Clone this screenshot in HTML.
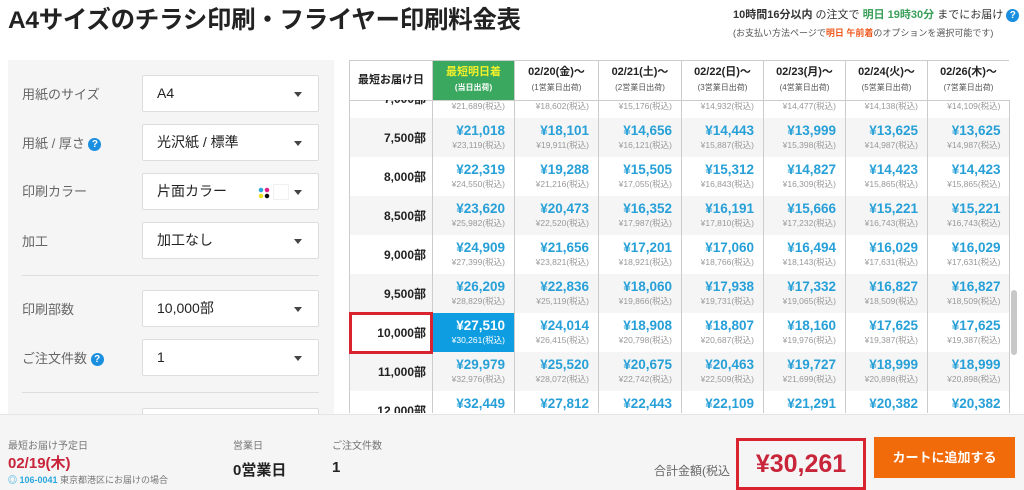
<!DOCTYPE html>
<html><head><meta charset="utf-8">
<style>
*{box-sizing:border-box;margin:0;padding:0}
body{width:1024px;height:490px;overflow:hidden;background:#fff;font-family:"Liberation Sans","Noto Sans CJK JP",sans-serif;color:#333;position:relative}
.abs{position:absolute}
h1{position:absolute;left:8px;top:1px;font-size:24.5px;font-weight:bold;color:#222;letter-spacing:-0.3px}
.info1{left:733px;top:6px;font-size:11px;color:#333;white-space:nowrap}
.info2{left:733px;top:26px;font-size:9px;color:#555;white-space:nowrap}
.g{color:#3aa05a;font-weight:bold}.o{color:#f05a1e;font-weight:bold}
.q{display:inline-block;width:13px;height:13px;border-radius:50%;background:#1a8fe0;color:#fff;font-size:10px;text-align:center;line-height:13px;font-weight:bold;vertical-align:middle}
.panel{left:8px;top:60px;width:326px;height:360px;background:#f5f5f5}
.lab{position:absolute;left:22px;font-size:13px;color:#666}
.sel{position:absolute;left:142px;width:177px;height:37px;background:#fff;border:1px solid #ddd;border-radius:2px;font-size:14px;color:#222;padding-left:14px;line-height:35px}
.sel:after{content:"";position:absolute;right:16px;top:16px;border-left:4px solid transparent;border-right:4px solid transparent;border-top:5px solid #444}
.hr{position:absolute;left:22px;width:297px;height:1px;background:#ddd}
.tbl{left:349px;top:60px;width:660px;height:353px;overflow:hidden;border-top:1px solid #ccc}
table{border-collapse:collapse;table-layout:fixed;width:660px}
th{height:39px;font-size:11px;font-weight:bold;color:#222;border-left:1px solid #ccc;border-bottom:1px solid #ccc;text-align:center;line-height:15px;background:#fff}
th small{display:block;font-size:8px;font-weight:normal;color:#555}
th.gr{background:#3aa85e;color:#f2f02a}th.gr small{color:#fff;font-weight:bold}
td{height:39px;border-left:1px solid #ccc;text-align:right;padding-right:9px;vertical-align:top;padding-top:5px}
td b{display:block;font-size:13.5px;color:#27a0d8;line-height:16px}
td i{display:block;font-style:normal;font-size:8.5px;color:#999;line-height:13px}
td.l{font-size:12px;font-weight:bold;color:#222;padding-top:11px;padding-right:6px;vertical-align:top}
tr.s td{background:#f5f5f5}
td.sel2{background:#0d9de0!important}td.sel2 b,td.sel2 i{color:#fff}
.body{position:absolute;left:0;top:39px;height:313px;overflow:hidden;width:660px}
.body table{margin-top:-21px}
.bar{left:0;top:414px;width:1024px;height:76px;background:#f5f5f5;border-top:1px solid #e5e5e5}
</style></head><body>
<h1>A4サイズのチラシ印刷・フライヤー印刷料金表</h1>
<div class="abs info1"><b>10時間16分以内</b> の注文で <span class="g">明日 19時30分</span> までにお届け <span class="q">?</span></div>
<div class="abs info2">(お支払い方法ページで<span class="o">明日 午前着</span>のオプションを選択可能です)</div>

<div class="abs panel"></div>
<div class="lab" style="top:84px">用紙のサイズ</div><div class="sel" style="top:75px">A4</div>
<div class="lab" style="top:133px">用紙 / 厚さ <span class="q">?</span></div><div class="sel" style="top:124px">光沢紙 / 標準</div>
<div class="lab" style="top:181px">印刷カラー</div><div class="sel" style="top:173px">片面カラー<span class="abs" style="left:115px;top:13px;width:12px;height:12px;background:radial-gradient(circle at 3px 3px,#29a8e0 2px,transparent 2.5px),radial-gradient(circle at 9px 3px,#e0208a 2px,transparent 2.5px),radial-gradient(circle at 3px 9px,#f0e020 2px,transparent 2.5px),radial-gradient(circle at 9px 9px,#111 2px,transparent 2.5px)"></span><span class="abs" style="left:130px;top:10px;width:16px;height:16px;border:1px solid #f0f0f0"></span></div>
<div class="lab" style="top:231px">加工</div><div class="sel" style="top:222px">加工なし</div>
<div class="hr" style="top:275px"></div>
<div class="lab" style="top:299px">印刷部数</div><div class="sel" style="top:290px">10,000部</div>
<div class="lab" style="top:348px">ご注文件数 <span class="q">?</span></div><div class="sel" style="top:339px">1</div>
<div class="hr" style="top:392px"></div>
<div class="sel" style="top:408px"></div>

<div class="abs tbl">
<table><colgroup><col style="width:83px"><col style="width:82px"><col style="width:84px"><col style="width:83px"><col style="width:82px"><col style="width:82px"><col style="width:82px"><col style="width:82px"></colgroup>
<tr><th style="border-left:1px solid #ccc">最短お届け日</th><th class="gr">最短明日着<small>(当日出荷)</small></th><th>02/20(金)～<small>(1営業日出荷)</small></th><th>02/21(土)～<small>(2営業日出荷)</small></th><th>02/22(日)～<small>(3営業日出荷)</small></th><th>02/23(月)～<small>(4営業日出荷)</small></th><th>02/24(火)～<small>(5営業日出荷)</small></th><th style="border-right:1px solid #ccc">02/26(木)～<small>(7営業日出荷)</small></th></tr>
</table>
<div class="body"><table><colgroup><col style="width:83px"><col style="width:82px"><col style="width:84px"><col style="width:83px"><col style="width:82px"><col style="width:82px"><col style="width:82px"><col style="width:82px"></colgroup>
<tr><td class="l">7,000部</td><td><b>¥19,717</b><i>¥21,689(税込)</i></td><td><b>¥16,911</b><i>¥18,602(税込)</i></td><td><b>¥13,796</b><i>¥15,176(税込)</i></td><td><b>¥13,574</b><i>¥14,932(税込)</i></td><td><b>¥13,161</b><i>¥14,477(税込)</i></td><td><b>¥12,853</b><i>¥14,138(税込)</i></td><td><b>¥12,826</b><i>¥14,109(税込)</i></td></tr>
<tr class="s"><td class="l">7,500部</td><td><b>¥21,018</b><i>¥23,119(税込)</i></td><td><b>¥18,101</b><i>¥19,911(税込)</i></td><td><b>¥14,656</b><i>¥16,121(税込)</i></td><td><b>¥14,443</b><i>¥15,887(税込)</i></td><td><b>¥13,999</b><i>¥15,398(税込)</i></td><td><b>¥13,625</b><i>¥14,987(税込)</i></td><td><b>¥13,625</b><i>¥14,987(税込)</i></td></tr>
<tr><td class="l">8,000部</td><td><b>¥22,319</b><i>¥24,550(税込)</i></td><td><b>¥19,288</b><i>¥21,216(税込)</i></td><td><b>¥15,505</b><i>¥17,055(税込)</i></td><td><b>¥15,312</b><i>¥16,843(税込)</i></td><td><b>¥14,827</b><i>¥16,309(税込)</i></td><td><b>¥14,423</b><i>¥15,865(税込)</i></td><td><b>¥14,423</b><i>¥15,865(税込)</i></td></tr>
<tr class="s"><td class="l">8,500部</td><td><b>¥23,620</b><i>¥25,982(税込)</i></td><td><b>¥20,473</b><i>¥22,520(税込)</i></td><td><b>¥16,352</b><i>¥17,987(税込)</i></td><td><b>¥16,191</b><i>¥17,810(税込)</i></td><td><b>¥15,666</b><i>¥17,232(税込)</i></td><td><b>¥15,221</b><i>¥16,743(税込)</i></td><td><b>¥15,221</b><i>¥16,743(税込)</i></td></tr>
<tr><td class="l">9,000部</td><td><b>¥24,909</b><i>¥27,399(税込)</i></td><td><b>¥21,656</b><i>¥23,821(税込)</i></td><td><b>¥17,201</b><i>¥18,921(税込)</i></td><td><b>¥17,060</b><i>¥18,766(税込)</i></td><td><b>¥16,494</b><i>¥18,143(税込)</i></td><td><b>¥16,029</b><i>¥17,631(税込)</i></td><td><b>¥16,029</b><i>¥17,631(税込)</i></td></tr>
<tr class="s"><td class="l">9,500部</td><td><b>¥26,209</b><i>¥28,829(税込)</i></td><td><b>¥22,836</b><i>¥25,119(税込)</i></td><td><b>¥18,060</b><i>¥19,866(税込)</i></td><td><b>¥17,938</b><i>¥19,731(税込)</i></td><td><b>¥17,332</b><i>¥19,065(税込)</i></td><td><b>¥16,827</b><i>¥18,509(税込)</i></td><td><b>¥16,827</b><i>¥18,509(税込)</i></td></tr>
<tr><td class="l">10,000部</td><td class="sel2"><b>¥27,510</b><i>¥30,261(税込)</i></td><td><b>¥24,014</b><i>¥26,415(税込)</i></td><td><b>¥18,908</b><i>¥20,798(税込)</i></td><td><b>¥18,807</b><i>¥20,687(税込)</i></td><td><b>¥18,160</b><i>¥19,976(税込)</i></td><td><b>¥17,625</b><i>¥19,387(税込)</i></td><td><b>¥17,625</b><i>¥19,387(税込)</i></td></tr>
<tr class="s"><td class="l">11,000部</td><td><b>¥29,979</b><i>¥32,976(税込)</i></td><td><b>¥25,520</b><i>¥28,072(税込)</i></td><td><b>¥20,675</b><i>¥22,742(税込)</i></td><td><b>¥20,463</b><i>¥22,509(税込)</i></td><td><b>¥19,727</b><i>¥21,699(税込)</i></td><td><b>¥18,999</b><i>¥20,898(税込)</i></td><td><b>¥18,999</b><i>¥20,898(税込)</i></td></tr>
<tr><td class="l">12,000部</td><td><b>¥32,449</b><i>¥35,693(税込)</i></td><td><b>¥27,812</b><i>¥30,593(税込)</i></td><td><b>¥22,443</b><i>¥24,687(税込)</i></td><td><b>¥22,109</b><i>¥24,319(税込)</i></td><td><b>¥21,291</b><i>¥23,420(税込)</i></td><td><b>¥20,382</b><i>¥22,420(税込)</i></td><td><b>¥20,382</b><i>¥22,420(税込)</i></td></tr>
</table></div>
</div>
<div class="abs" style="left:1009px;top:100px;width:1px;height:313px;background:#ccc"></div>
<div class="abs" style="left:1011px;top:290px;width:6px;height:65px;background:#c8c8c8;border-radius:3px"></div>
<div class="abs" style="left:349px;top:312px;width:84px;height:42px;border:3px solid #d9232e"></div>

<div class="abs bar"></div>
<div class="abs" style="left:8px;top:437px;font-size:10px;color:#777">最短お届け予定日</div>
<div class="abs" style="left:8px;top:452px;font-size:15px;font-weight:bold;color:#c8243a">02/19(木)</div>
<div class="abs" style="left:8px;top:473px;font-size:9px;color:#777"><span style="color:#29a8e0;font-weight:bold">◎ 106-0041</span> 東京都港区にお届けの場合</div>
<div class="abs" style="left:233px;top:437px;font-size:10px;color:#777">営業日</div>
<div class="abs" style="left:233px;top:459px;font-size:15px;font-weight:bold;color:#222">0営業日</div>
<div class="abs" style="left:332px;top:437px;font-size:10px;color:#777">ご注文件数</div>
<div class="abs" style="left:332px;top:459px;font-size:15px;font-weight:bold;color:#222">1</div>
<div class="abs" style="left:654px;top:462px;font-size:12px;color:#666">合計金額(税込</div>
<div class="abs" style="left:736px;top:438px;width:130px;height:52px;border:3px solid #d9232e;background:#f5f5f5;font-size:25px;font-weight:bold;color:#c8243a;text-align:center;line-height:46px">¥30,261</div>
<div class="abs" style="left:874px;top:437px;width:141px;height:41px;background:#f26b0a;color:#fff;font-size:13px;font-weight:bold;text-align:center;line-height:41px">カートに追加する</div>
</body></html>
